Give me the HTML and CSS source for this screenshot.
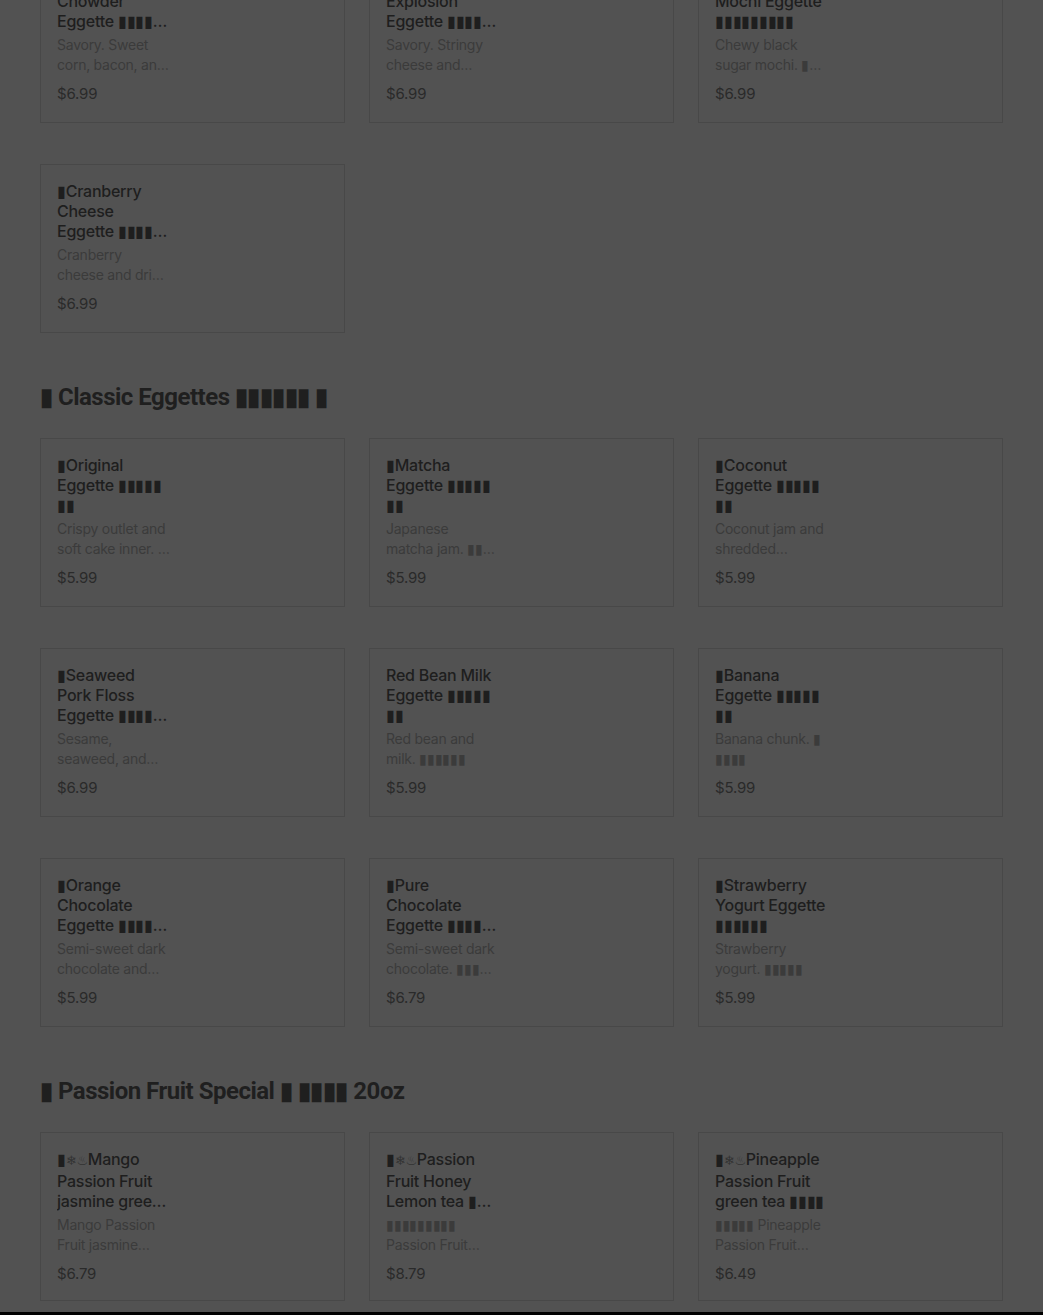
FILE: index.html
```html
<!DOCTYPE html>
<html lang="en">
<head>
<meta charset="utf-8">
<title>Menu</title>
<link rel="stylesheet" href="styles.css">
</head>
<body>
<main class="menu">
  <section class="section first">
    <div class="grid">
      <article class="card"><div class="info">
        <h3 class="name">▮Sweet Corn Chowder Eggette <span class="cjk">▮▮▮▮▮▮▮</span></h3>
        <p class="desc">Savory. Sweet corn, bacon, and cheese.</p>
        <p class="price">$6.99</p></div></article>
      <article class="card"><div class="info">
        <h3 class="name">▮Cheese Explosion Eggette <span class="cjk">▮▮▮▮▮▮▮</span></h3>
        <p class="desc">Savory. Stringy cheese and mozzarella.</p>
        <p class="price">$6.99</p></div></article>
      <article class="card"><div class="info">
        <h3 class="name">▮Black Sugar Mochi Eggette <span class="cjk">▮▮▮▮▮▮▮▮▮</span></h3>
        <p class="desc">Chewy black sugar mochi. <span class="cjk">▮▮▮▮▮</span></p>
        <p class="price">$6.99</p></div></article>
      <article class="card"><div class="info">
        <h3 class="name">▮Cranberry Cheese Eggette <span class="cjk">▮▮▮▮▮▮▮</span></h3>
        <p class="desc">Cranberry cheese and dried cranberry.</p>
        <p class="price">$6.99</p></div></article>
    </div>
  </section>

  <section class="section">
    <h2 class="heading">▮ Classic Eggettes ▮▮▮▮▮▮ ▮</h2>
    <div class="grid">
      <article class="card"><div class="info">
        <h3 class="name">▮Original Eggette <span class="cjk">▮▮▮▮▮▮▮</span></h3>
        <p class="desc">Crispy outlet and soft cake inner. <span class="cjk">▮▮▮▮</span></p>
        <p class="price">$5.99</p></div></article>
      <article class="card"><div class="info">
        <h3 class="name">▮Matcha Eggette <span class="cjk">▮▮▮▮▮▮▮</span></h3>
        <p class="desc">Japanese matcha jam. <span class="cjk">▮▮▮▮▮▮</span></p>
        <p class="price">$5.99</p></div></article>
      <article class="card"><div class="info">
        <h3 class="name">▮Coconut Eggette <span class="cjk">▮▮▮▮▮▮▮</span></h3>
        <p class="desc">Coconut jam and shredded coconut.</p>
        <p class="price">$5.99</p></div></article>
      <article class="card"><div class="info">
        <h3 class="name">▮Seaweed Pork Floss Eggette <span class="cjk">▮▮▮▮▮▮</span></h3>
        <p class="desc">Sesame, seaweed, and pork floss.</p>
        <p class="price">$6.99</p></div></article>
      <article class="card"><div class="info">
        <h3 class="name">Red Bean Milk Eggette <span class="cjk">▮▮▮▮▮▮▮</span></h3>
        <p class="desc">Red bean and milk. <span class="cjk">▮▮▮▮▮▮</span></p>
        <p class="price">$5.99</p></div></article>
      <article class="card"><div class="info">
        <h3 class="name">▮Banana Eggette <span class="cjk">▮▮▮▮▮▮▮</span></h3>
        <p class="desc">Banana chunk. <span class="cjk">▮▮▮▮▮</span></p>
        <p class="price">$5.99</p></div></article>
      <article class="card"><div class="info">
        <h3 class="name">▮Orange Chocolate Eggette <span class="cjk">▮▮▮▮▮▮</span></h3>
        <p class="desc">Semi-sweet dark chocolate and orange.</p>
        <p class="price">$5.99</p></div></article>
      <article class="card"><div class="info">
        <h3 class="name">▮Pure Chocolate Eggette <span class="cjk">▮▮▮▮▮▮</span></h3>
        <p class="desc">Semi-sweet dark chocolate. <span class="cjk">▮▮▮▮▮▮</span></p>
        <p class="price">$6.79</p></div></article>
      <article class="card"><div class="info">
        <h3 class="name">▮Strawberry Yogurt Eggette <span class="cjk">▮▮▮▮▮▮</span></h3>
        <p class="desc">Strawberry yogurt. <span class="cjk">▮▮▮▮▮</span></p>
        <p class="price">$5.99</p></div></article>
    </div>
  </section>

  <section class="section">
    <h2 class="heading">▮ Passion Fruit Special ▮ ▮▮▮▮ 20oz</h2>
    <div class="grid">
      <article class="card"><div class="info">
        <h3 class="name">▮<span class="emo">❄︎♨︎</span>Mango Passion Fruit jasmine green tea <span class="cjk">▮▮▮</span></h3>
        <p class="desc">Mango Passion Fruit jasmine green tea.</p>
        <p class="price">$6.79</p></div></article>
      <article class="card"><div class="info">
        <h3 class="name">▮<span class="emo">❄︎♨︎</span>Passion Fruit Honey Lemon tea <span class="cjk">▮▮▮▮</span></h3>
        <p class="desc"><span class="cjk">▮▮▮▮▮▮▮▮▮</span> Passion Fruit Honey Lemon tea.</p>
        <p class="price">$8.79</p></div></article>
      <article class="card"><div class="info">
        <h3 class="name">▮<span class="emo">❄︎♨︎</span>Pineapple Passion Fruit green tea <span class="cjk">▮▮▮▮</span></h3>
        <p class="desc"><span class="cjk">▮▮▮▮▮</span> Pineapple Passion Fruit green tea.</p>
        <p class="price">$6.49</p></div></article>
    </div>
  </section>
</main>
<div class="bottom-bar"></div>
</body>
</html>
```
FILE: styles.css
```css
html, body {
  margin: 0;
  padding: 0;
}
body {
  background: #525252;
  font-family: Inter, Roboto, "Liberation Sans", sans-serif;
  overflow: hidden;
  height: 1315px;
}
.menu {
  padding: 0 40px;
  margin-top: -46px;
}
.heading {
  margin: 48px 0 25px;
  font-family: Roboto, "Liberation Sans", sans-serif;
  font-size: 24px;
  line-height: 32px;
  font-weight: 700;
  color: #1f1f1f;
  letter-spacing: -0.5px;
}
.grid {
  display: grid;
  grid-template-columns: repeat(3, 1fr);
  column-gap: 24px;
  row-gap: 41px;
}
.card {
  box-sizing: border-box;
  height: 169px;
  border: 1px solid #484848;
  padding: 16px 16px 0;
  display: flex;
}
.info {
  width: 113px;
  display: flex;
  flex-direction: column;
}
.cjk {
  word-break: break-all;
}
.name {
  margin: 0;
  font-size: 16px;
  line-height: 20px;
  font-weight: 500;
  letter-spacing: -0.25px;
  color: #1e1e1e;
  display: -webkit-box;
  -webkit-line-clamp: 3;
  -webkit-box-orient: vertical;
  overflow: hidden;
}
.emo {
  font-family: "DejaVu Sans", sans-serif;
  font-size: 13px;
  color: #333;
}
.desc {
  margin: 4px 0 0;
  font-size: 14px;
  line-height: 20px;
  letter-spacing: -0.25px;
  color: #3b3b3b;
  display: -webkit-box;
  -webkit-line-clamp: 2;
  -webkit-box-orient: vertical;
  overflow: hidden;
}
.price {
  margin: 9px 0 0;
  font-size: 15px;
  line-height: 20px;
  letter-spacing: -0.2px;
  color: #2a2a2a;
}
.bottom-bar {
  margin-top: 11px;
  height: 40px;
  background: #000;
}
```
